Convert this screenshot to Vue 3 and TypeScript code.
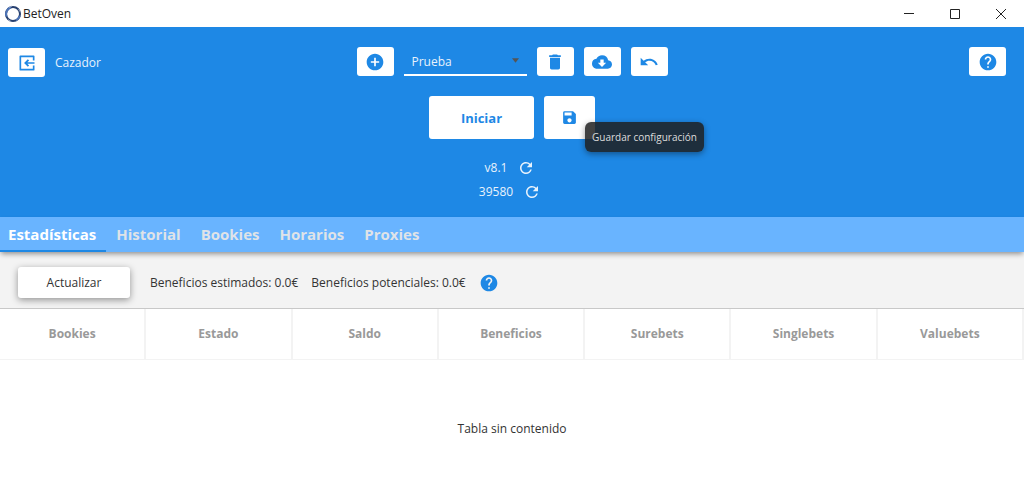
<script setup lang="ts">
import { ref } from 'vue'

const profiles = ['Prueba']
const profile = ref('Prueba')

const tabs = ['Estadísticas', 'Historial', 'Bookies', 'Horarios', 'Proxies']
const activeTab = ref('Estadísticas')

const columns = ['Bookies', 'Estado', 'Saldo', 'Beneficios', 'Surebets', 'Singlebets', 'Valuebets']

const versions = [
  { label: 'v8.1', action: 'Comprobar versión' },
  { label: '39580', action: 'Actualizar contador' },
]
</script>

<template>
  <div class="window">
    <header class="titlebar">
      <svg class="logo" viewBox="0 0 18 18" aria-hidden="true">
        <circle cx="9" cy="9" r="7" fill="none" stroke="#27406f" stroke-width="2" />
        <path d="M2.6 11.5A7 7 0 0 1 7 2.3M12 15.3a7 7 0 0 0 3.8-4.5" fill="none" stroke="#4d74b8" stroke-width="2" />
        <path d="M5 2.4 8 1M14.500 4.200 16.400 7M4 14.500 7 16.500" stroke="#a9b8d2" stroke-width="0.800" />
      </svg>
      <span class="title">BetOven</span>
      <div class="window-controls">
        <button type="button" aria-label="Minimizar">
          <svg viewBox="0 0 12 12"><path d="M1 5.500h10" /></svg>
        </button>
        <button type="button" aria-label="Maximizar">
          <svg viewBox="0 0 12 12"><path d="M1.500 1.500h9v9h-9z" /></svg>
        </button>
        <button type="button" aria-label="Cerrar">
          <svg viewBox="0 0 12 12"><path d="M1 1l10 10M11 1L1 11" /></svg>
        </button>
      </div>
    </header>

    <section class="hero">
      <div class="topbar">
        <div class="account">
          <button class="tile" type="button" aria-label="Salir">
            <svg class="icon" viewBox="0 0 24 24">
              <path d="M20 9V4H4v16h16v-5" fill="none" stroke="currentColor" stroke-width="2" stroke-linejoin="round" />
              <path d="M21 11v2h-8.500l2 2-1.500 1.500L8.500 12 13 7.500 14.500 9l-2 2z" />
            </svg>
          </button>
          <span>Cazador</span>
        </div>
        <div class="profile-tools">
          <button class="tile" type="button" aria-label="Añadir">
            <svg class="icon" viewBox="0 0 24 24"><path d="M12 2C6.480 2 2 6.480 2 12s4.480 10 10 10 10-4.480 10-10S17.520 2 12 2zm5 11h-4v4h-2v-4H7v-2h4V7h2v4h4v2z" /></svg>
          </button>
          <div class="combo">
            <select v-model="profile" aria-label="Perfil">
              <option v-for="name in profiles" :key="name">{{ name }}</option>
            </select>
            <svg class="caret" viewBox="0 0 8 5" aria-hidden="true"><path d="M0 0h8L4 5z" /></svg>
          </div>
          <button class="tile" type="button" aria-label="Eliminar">
            <svg class="icon" viewBox="0 0 24 24"><path d="M6 19c0 1.100.9 2 2 2h8c1.100 0 2-.9 2-2V7H6v12zM19 4h-3.500l-1-1h-5l-1 1H5v2h14V4z" /></svg>
          </button>
          <button class="tile" type="button" aria-label="Descargar">
            <svg class="icon" viewBox="0 0 24 24"><path d="M19.350 10.040A7.490 7.490 0 0 0 12 4C9.110 4 6.600 5.640 5.350 8.040A5.994 5.994 0 0 0 0 14c0 3.310 2.690 6 6 6h13c2.760 0 5-2.240 5-5 0-2.640-2.050-4.780-4.650-4.960zM17 13l-5 5-5-5h3V9h4v4h3z" /></svg>
          </button>
          <button class="tile" type="button" aria-label="Deshacer">
            <svg class="icon" viewBox="0 0 24 24"><path d="M12.500 8c-2.650 0-5.050.99-6.900 2.600L2 7v9h9l-3.620-3.620c1.390-1.160 3.160-1.880 5.120-1.880 3.540 0 6.550 2.310 7.600 5.500l2.370-.78C21.080 11.030 17.150 8 12.500 8z" /></svg>
          </button>
        </div>
        <div class="help">
          <button class="tile" type="button" aria-label="Ayuda">
            <svg class="icon" viewBox="0 0 24 24"><path d="M12 2C6.480 2 2 6.480 2 12s4.480 10 10 10 10-4.480 10-10S17.520 2 12 2zm1 17h-2v-2h2v2zm2.070-7.750l-.9.920C13.450 12.900 13 13.500 13 15h-2v-.5c0-1.100.45-2.100 1.170-2.830l1.240-1.260c.37-.36.59-.86.59-1.410 0-1.100-.9-2-2-2s-2 .9-2 2H8c0-2.210 1.790-4 4-4s4 1.790 4 4c0 .88-.36 1.680-.93 2.250z" /></svg>
          </button>
        </div>
      </div>

      <div class="actions">
        <button class="start" type="button">Iniciar</button>
        <div class="save-wrap">
          <button class="save" type="button" aria-label="Guardar" aria-describedby="save-tip">
            <svg class="save-icon" viewBox="0 0 24 24"><path d="M17 3H5a2 2 0 0 0-2 2v14c0 1.100.89 2 2 2h14c1.100 0 2-.9 2-2V7l-4-4zm-5 16c-1.660 0-3-1.340-3-3s1.340-3 3-3 3 1.340 3 3-1.340 3-3 3zm3-10H5V5h10v4z" /></svg>
          </button>
          <span id="save-tip" class="tooltip" role="tooltip">Guardar configuración</span>
        </div>
      </div>

      <div class="versions">
        <div v-for="item in versions" :key="item.label" class="version">
          <span>{{ item.label }}</span>
          <button type="button" :aria-label="item.action">
            <svg viewBox="0 0 24 24"><path d="M17.650 6.350A7.958 7.958 0 0 0 12 4c-4.420 0-7.990 3.580-7.990 8s3.570 8 7.990 8c3.730 0 6.840-2.550 7.730-6h-2.080A5.990 5.990 0 0 1 12 18c-3.310 0-6-2.690-6-6s2.690-6 6-6c1.660 0 3.140.69 4.220 1.780L13 11h7V4l-2.350 2.350z" /></svg>
          </button>
        </div>
      </div>
    </section>

    <nav class="tabs" role="tablist">
      <button
        v-for="tab in tabs"
        :key="tab"
        type="button"
        role="tab"
        class="tab"
        :class="{ active: tab === activeTab }"
        :aria-selected="tab === activeTab"
        @click="activeTab = tab"
      >{{ tab }}</button>
    </nav>

    <div class="summary">
      <button class="refresh" type="button">Actualizar</button>
      <span>Beneficios estimados: 0.0€</span>
      <span>Beneficios potenciales: 0.0€</span>
      <button class="hint" type="button" aria-label="Ayuda sobre beneficios">
        <svg class="icon" viewBox="0 0 24 24"><path d="M12 2C6.480 2 2 6.480 2 12s4.480 10 10 10 10-4.480 10-10S17.520 2 12 2zm1 17h-2v-2h2v2zm2.070-7.750l-.9.920C13.450 12.900 13 13.500 13 15h-2v-.5c0-1.100.45-2.100 1.170-2.830l1.240-1.260c.37-.36.59-.86.59-1.410 0-1.100-.9-2-2-2s-2 .9-2 2H8c0-2.210 1.790-4 4-4s4 1.790 4 4c0 .88-.36 1.680-.93 2.250z" /></svg>
      </button>
    </div>

    <table class="stats">
      <thead>
        <tr>
          <th v-for="column in columns" :key="column" scope="col">{{ column }}</th>
        </tr>
      </thead>
      <tbody>
        <tr>
          <td :colspan="columns.length">Tabla sin contenido</td>
        </tr>
      </tbody>
    </table>
  </div>
</template>

<style>
body {
  margin: 0;
  background: #fff;
}
</style>

<style scoped>
.window {
  font-family: "Open Sans", "Noto Sans", sans-serif;
  font-size: 12px;
  line-height: 16px;
  color: #333;
}

button,
select {
  margin: 0;
  padding: 0;
  border: 0;
  background: none;
  color: inherit;
  font: inherit;
  cursor: pointer;
}

svg {
  display: block;
  fill: currentColor;
}

.titlebar {
  display: flex;
  align-items: center;
  height: 27px;
  padding-left: 4px;
  color: #222;
}

.logo {
  width: 18px;
  height: 18px;
  margin-right: 1px;
}

.window-controls {
  display: flex;
  align-self: stretch;
  margin-left: auto;
}

.window-controls button {
  display: grid;
  place-items: center;
  width: 46px;
}

.window-controls svg {
  width: 12px;
  height: 12px;
  fill: none;
  stroke: #222;
}

.hero {
  padding: 20px 8px 13px;
  background: #1e88e5;
  color: #e8f2fc;
}

.topbar {
  display: grid;
  grid-template-columns: 1fr auto 1fr;
  align-items: start;
}

.account,
.profile-tools {
  display: flex;
  align-items: center;
  gap: 10px;
}

.account {
  padding-top: 1px;
}

.help {
  display: flex;
  justify-content: flex-end;
  padding-right: 10px;
}

.tile {
  display: grid;
  place-items: center;
  width: 37px;
  height: 29px;
  border-radius: 3px;
  background: #fff;
  color: #1e88e5;
}

.icon {
  width: 20px;
  height: 20px;
}

.combo {
  display: flex;
  align-items: center;
  box-sizing: border-box;
  width: 123px;
  height: 29px;
  border-bottom: 2px solid #fff;
}

.combo select {
  flex: 1;
  height: 27px;
  padding: 2px 0 0 8px;
  appearance: none;
  outline: none;
}

.caret {
  width: 7px;
  height: 5px;
  margin-right: 8px;
  color: #555;
  pointer-events: none;
}

.actions {
  display: flex;
  justify-content: center;
  gap: 10px;
  margin-top: 19px;
}

.start,
.save {
  height: 43px;
  border-radius: 3px;
  background: #fff;
  color: #1e88e5;
}

.start {
  width: 105px;
  font-size: 13px;
  font-weight: 700;
}

.save-wrap {
  position: relative;
}

.save {
  display: grid;
  place-items: center;
  width: 51px;
}

.save-icon {
  width: 17px;
  height: 17px;
}

.tooltip {
  position: absolute;
  top: 26px;
  left: 41px;
  padding: 7px;
  border-radius: 6px;
  background: rgba(30, 30, 30, 0.85);
  box-shadow: 0 2px 6px rgba(0, 0, 0, 0.4);
  color: #ddd;
  font-size: 10px;
  white-space: nowrap;
}

.versions {
  display: flex;
  flex-direction: column;
  align-items: center;
  margin-top: 17px;
}

.version {
  display: flex;
  align-items: center;
  gap: 10px;
  height: 24px;
  padding-right: 4px;
}

.version svg {
  width: 18px;
  height: 18px;
}

.tabs {
  position: relative;
  display: flex;
  background: #69b4ff;
  box-shadow: 0 3px 5px -1px rgba(0, 0, 0, 0.4);
}

.tab {
  height: 35px;
  padding: 0 10px;
  border-bottom: 2px solid transparent;
  color: #dfe3e8;
  font-size: 15px;
  font-weight: 700;
}

.tab:first-child {
  padding-left: 8px;
}

.tab.active {
  border-bottom-color: #1e88e5;
  color: #fff;
}

.summary {
  display: flex;
  align-items: center;
  gap: 13px;
  box-sizing: border-box;
  height: 57px;
  padding: 5px 18px 0;
  border-bottom: 1px solid #c8c8c8;
  background: #f3f3f3;
}

.refresh {
  width: 112px;
  height: 31px;
  margin-right: 7px;
  border-radius: 3px;
  background: #fff;
  box-shadow: 0 2px 7px rgba(0, 0, 0, 0.4);
}

.hint {
  color: #1e88e5;
}

.stats {
  width: 100%;
  border-collapse: separate;
  border-spacing: 0;
  table-layout: fixed;
}

.stats th {
  height: 50px;
  padding: 0;
  border-right: 2px solid #f3f3f3;
  border-bottom: 1px solid #f3f3f3;
  color: #999;
  font-weight: 700;
}

.stats td {
  box-sizing: border-box;
  height: 134px;
  padding: 4px 0 0;
  text-align: center;
}
</style>
